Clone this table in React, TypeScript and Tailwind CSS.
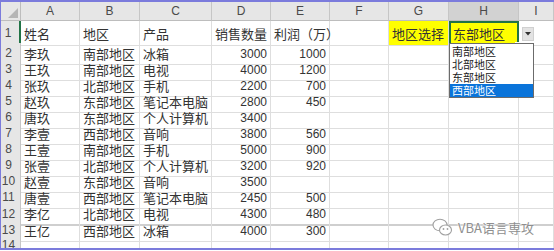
import React from "react";

const rows: (string | number)[][] = [
  ["李玖", "南部地区", "冰箱", 3000, 1000],
  ["王玖", "南部地区", "电视", 4000, 1200],
  ["张玖", "北部地区", "手机", 2200, 700],
  ["赵玖", "东部地区", "笔记本电脑", 2800, 450],
  ["唐玖", "东部地区", "个人计算机", 3400, ""],
  ["李壹", "西部地区", "音响", 3800, 560],
  ["王壹", "南部地区", "手机", 5000, 900],
  ["张壹", "北部地区", "个人计算机", 3200, 920],
  ["赵壹", "东部地区", "音响", 3500, ""],
  ["唐壹", "西部地区", "笔记本电脑", 2450, 500],
  ["李亿", "北部地区", "电视", 4300, 480],
  ["王亿", "西部地区", "冰箱", 4000, 300],
];

const GRID = "grid grid-cols-[20px_59px_60px_72px_59px_59px_59px_60px_70px_1fr]";
const CJK = "font-['Noto_Sans_CJK_SC',sans-serif]";
const LAT = "font-['Liberation_Sans',sans-serif]";

function RowHead({ n, active }: { n: number; active?: boolean }) {
  return (
    <div
      className={`flex items-center justify-center pr-[4px] bg-[#e6e6e6] border-b border-[#d0d0d0] text-[12px] text-[#4a4a4a] ${LAT} ${
        active ? "border-r-2 border-r-[#217346]" : "border-r border-r-[#c6c6c6]"
      }`}
    >
      {n}
    </div>
  );
}

function Cell({
  children,
  right,
  className = "",
}: {
  children?: React.ReactNode;
  right?: boolean;
  className?: string;
}) {
  return (
    <div
      className={`flex items-center whitespace-nowrap overflow-visible px-[3px] pt-[1px] border-r border-b border-[#dedede] text-[#333] ${
        right ? `justify-end text-[12px] ${LAT}` : `text-[13px] ${CJK}`
      } ${className}`}
    >
      {children}
    </div>
  );
}

export default function App() {
  const letters = ["A", "B", "C", "D", "E", "F", "G", "H", "I"];
  return (
    <div className="relative w-[554px] h-[251px] bg-white overflow-hidden">
      <div className="h-[250px] border-t-2 border-l border-b-2 border-[#7b7bdc] flex flex-col overflow-hidden">
        <div className={`${GRID} h-[19px] shrink-0`}>
          <div className="relative bg-[#e6e6e6] border-r border-b border-[#bdbdbd]">
            <svg className="absolute right-[2px] bottom-[2px]" width="10" height="10" viewBox="0 0 10 10">
              <polygon points="10,0 10,10 0,10" fill="#b5b5b5" />
            </svg>
          </div>
          {letters.map((l) => (
            <div
              key={l}
              className={`flex items-center justify-center border-r border-b border-r-[#c6c6c6] border-b-[#bdbdbd] text-[12px] text-[#4a4a4a] ${LAT} ${
                l === "H" ? "bg-[#d2d2d2]" : "bg-[#e6e6e6]"
              }`}
            >
              {l}
            </div>
          ))}
        </div>

        <div className={`${GRID} h-[22px] shrink-0`}>
          <RowHead n={1} active />
          <Cell>姓名</Cell>
          <Cell>地区</Cell>
          <Cell>产品</Cell>
          <Cell>销售数量</Cell>
          <Cell>利润（万）</Cell>
          <Cell />
          <Cell className="bg-[#ffff00]">地区选择</Cell>
          <div
            className={`relative flex items-center px-[2px] pt-[1px] bg-[#ffff00] border-2 border-[#217346] text-[13px] text-[#333] ${CJK}`}
          >
            东部地区
            <div className="absolute right-[-3px] bottom-[-3px] w-[5px] h-[5px] bg-[#217346] border border-white" />
          </div>
          <Cell />
        </div>

        {rows.map((r, i) => {
          const n = i + 2;
          const h = n === 12 ? "h-[17px]" : "h-[16px]";
          const thick = n === 12 ? "border-b-2 border-b-[#cfcfcf]" : "";
          return (
            <div key={n} className={`${GRID} ${h} shrink-0`}>
              <RowHead n={n} />
              <Cell className={thick}>{r[0]}</Cell>
              <Cell className={thick}>{r[1]}</Cell>
              <Cell className={thick}>{r[2]}</Cell>
              <Cell right className={thick}>{r[3]}</Cell>
              <Cell right className={thick}>{r[4]}</Cell>
              <Cell className={thick} />
              <Cell className={thick} />
              <Cell className={thick} />
              <Cell className={thick} />
            </div>
          );
        })}

        <div className={`${GRID} h-[16px] shrink-0`}>
          <RowHead n={14} />
          {letters.map((l) => (
            <Cell key={l} />
          ))}
        </div>
      </div>

      <div className="absolute left-[522px] top-[27px] w-[12px] h-[14px] bg-[#e3e3e3] border border-[#d0d0d0] flex items-center justify-center">
        <svg width="6" height="4" viewBox="0 0 6 4">
          <polygon points="0,0 6,0 3,3.5" fill="#333" />
        </svg>
      </div>

      <div className={`absolute left-[449px] top-[43px] w-[85px] h-[55px] bg-white border border-[#6b6b6b] pt-[1px] text-[11px] leading-[13px] text-[#222] ${CJK}`}>
        {["南部地区", "北部地区", "东部地区", "西部地区"].map((t, i) => (
          <div
            key={t}
            className={`h-[13px] pl-[2px] ${i === 3 ? "bg-[#0a74da] text-white" : ""}`}
          >
            {t}
          </div>
        ))}
      </div>

      <div className="absolute left-[432px] top-[218px] flex items-center gap-[5px]">
        <svg width="21" height="19" viewBox="0 0 21 19" fill="none">
          <ellipse cx="8" cy="7" rx="7" ry="5.8" stroke="#a0a0a0" strokeWidth="1.1" fill="white" />
          <ellipse cx="13.5" cy="12" rx="6" ry="5" stroke="#a0a0a0" strokeWidth="1.1" fill="white" />
          <circle cx="11.5" cy="11" r="0.9" fill="#a0a0a0" />
          <circle cx="15.5" cy="11" r="0.9" fill="#a0a0a0" />
        </svg>
        <span className={`text-[13px] text-[#8f8f8f] [text-shadow:0_0_2px_white,0_0_2px_white] font-['Noto_Sans_CJK_JP',sans-serif]`}>
          VBA语言専攻
        </span>
      </div>
    </div>
  );
}
